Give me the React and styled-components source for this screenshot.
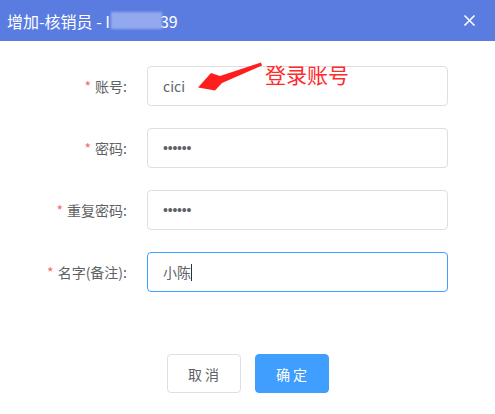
import React from "react";
import styled, { createGlobalStyle } from "styled-components";

const Global = createGlobalStyle`
  html, body { margin: 0; padding: 0; background: #fff; }
  body { font-family: "Noto Sans CJK SC", "Noto Sans", sans-serif; }
  * { box-sizing: border-box; }
`;

const Dialog = styled.div`
  position: relative;
  width: 495px;
  height: 414px;
  background: #fff;
  display: flex;
  flex-direction: column;
`;

const Header = styled.div`
  height: 41px;
  background: #5a7ce0;
  display: flex;
  align-items: center;
  justify-content: space-between;
  padding: 0 19px 0 7px;
`;

const Title = styled.div`
  color: #fff;
  font-size: 16px;
  line-height: 20px;
  display: flex;
  align-items: center;
  white-space: pre;
`;

const Blur = styled.span`
  display: inline-block;
  width: 51px;
  height: 17px;
  margin: 0 -2px 0 1px;
  background: #92a9ee;
  filter: blur(1.2px);
  position: relative;
  z-index: 1;
`;

const Close = styled.button`
  border: 0;
  background: transparent;
  padding: 0;
  width: 13px;
  height: 13px;
  display: flex;
  cursor: pointer;
`;

const Body = styled.div`
  padding: 25px 0 0 0;
  display: flex;
  flex-direction: column;
  gap: 22px;
`;

const Row = styled.div`
  display: flex;
  align-items: center;
  height: 40px;
`;

const Label = styled.label`
  width: 147px;
  padding-right: 20px;
  text-align: right;
  font-size: 14px;
  color: #606266;
  white-space: pre;
`;

const Star = styled.span`
  color: #f56c6c;
  margin-right: 4px;
`;

const Field = styled.div`
  width: 301px;
  height: 40px;
  border: 1px solid ${(p) => (p.$focus ? "#409eff" : "#dcdfe6")};
  border-radius: 4px;
  padding: 0 15px;
  display: flex;
  align-items: center;
  font-size: 14px;
  color: #606266;
  font-family: ${(p) => (p.$dots ? '"Liberation Sans", sans-serif' : '"Noto Sans CJK SC", "Noto Sans", sans-serif')};
  letter-spacing: ${(p) => (p.$dots ? "-0.2px" : "0")};
`;

const Caret = styled.span`
  display: inline-block;
  width: 1px;
  height: 17px;
  background: #303133;
`;

const Footer = styled.div`
  margin-top: 62px;
  display: flex;
  justify-content: center;
  gap: 14px;
`;

const Button = styled.button`
  width: 74px;
  height: 39px;
  border-radius: 4px;
  font-family: "Noto Sans CJK SC", sans-serif;
  font-size: 14px;
  border: 1px solid ${(p) => (p.$primary ? "#409eff" : "#dcdfe6")};
  background: ${(p) => (p.$primary ? "#409eff" : "#fff")};
  color: ${(p) => (p.$primary ? "#fff" : "#606266")};
  white-space: pre;
  padding: 0;
  cursor: pointer;
`;

const Note = styled.div`
  position: absolute;
  left: 265px;
  top: 61px;
  color: #ff2a2a;
  font-size: 21px;
  line-height: 27px;
  font-family: "Noto Sans CJK SC", sans-serif;
`;

const Arrow = styled.svg`
  position: absolute;
  left: 0;
  top: 0;
  pointer-events: none;
`;

export default function App() {
  return (
    <>
      <Global />
      <Dialog>
        <Header>
          <Title>
            增加-核销员 - I<Blur />39
          </Title>
          <Close aria-label="close">
            <svg width="13" height="13" viewBox="0 0 13 13">
              <path d="M1.5 1.5 L11.5 11.5 M11.5 1.5 L1.5 11.5" stroke="#fff" strokeWidth="1.6" />
            </svg>
          </Close>
        </Header>
        <Body>
          <Row>
            <Label><Star>*</Star>账号:</Label>
            <Field>cici</Field>
          </Row>
          <Row>
            <Label><Star>*</Star>密码:</Label>
            <Field $dots>••••••</Field>
          </Row>
          <Row>
            <Label><Star>*</Star>重复密码:</Label>
            <Field $dots>••••••</Field>
          </Row>
          <Row>
            <Label><Star>*</Star>名字(备注):</Label>
            <Field $focus>小陈<Caret /></Field>
          </Row>
        </Body>
        <Footer>
          <Button>取 消</Button>
          <Button $primary>确 定</Button>
        </Footer>
        <Note>登录账号</Note>
        <Arrow width="495" height="414" viewBox="0 0 495 414">
          <polygon points="261,62.5 220,76 211,73 198,87.5 215,90.5 222,83 262,65.5" fill="#ff1e1e" />
        </Arrow>
      </Dialog>
    </>
  );
}
